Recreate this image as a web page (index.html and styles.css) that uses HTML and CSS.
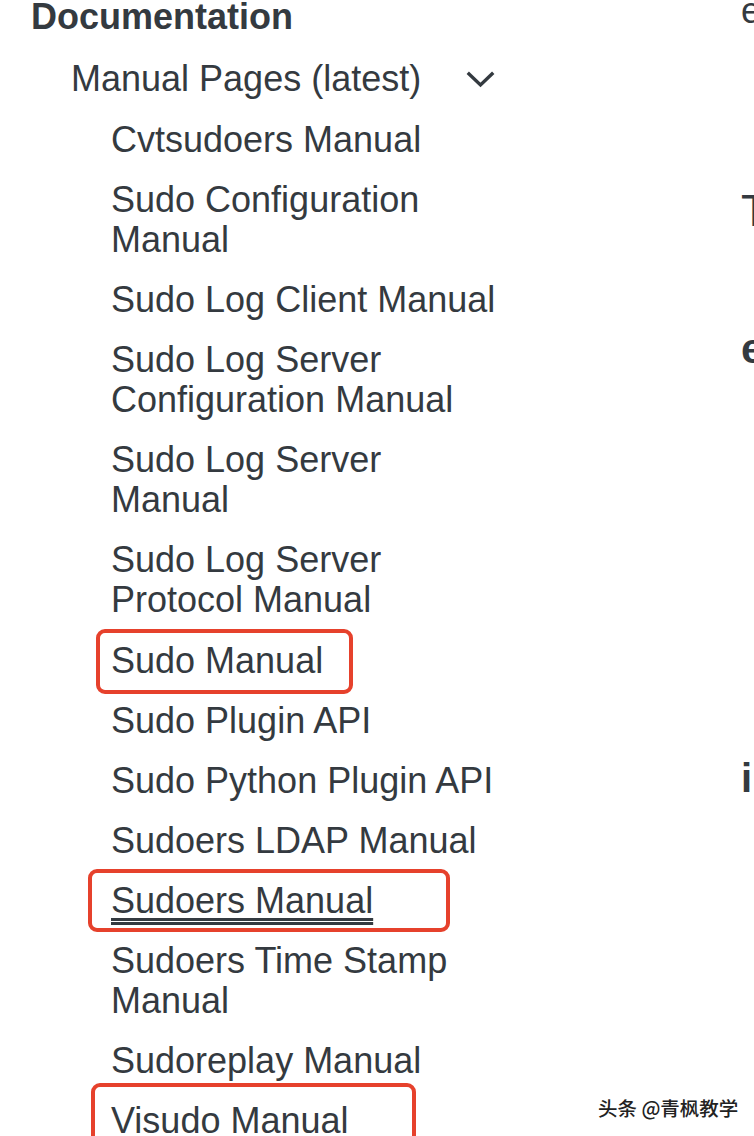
FILE: index.html
```html
<!DOCTYPE html>
<html lang="en">
<head>
<meta charset="utf-8">
<title>Documentation</title>
<link rel="stylesheet" href="styles.css">
</head>
<body>
<div class="page">
  <nav class="sidebar">
    <h2 class="side-title">Documentation</h2>
    <ul class="group">
      <li class="group-head">
        <span>Manual Pages (latest)</span>
        <svg class="chev" width="30" height="20" viewBox="0 0 30 20"><path d="M3 4 L14.5 15 L26 4" fill="none" stroke="#343a40" stroke-width="3.4" stroke-linecap="square"/></svg>
      </li>
      <li>
        <ul class="items">
          <li><a href="#">Cvtsudoers Manual</a></li>
          <li><a href="#">Sudo Configuration Manual</a></li>
          <li><a href="#">Sudo Log Client Manual</a></li>
          <li><a href="#">Sudo Log Server Configuration Manual</a></li>
          <li><a href="#">Sudo Log Server Manual</a></li>
          <li><a href="#">Sudo Log Server Protocol Manual</a></li>
          <li><a href="#">Sudo Manual</a></li>
          <li><a href="#">Sudo Plugin API</a></li>
          <li><a href="#">Sudo Python Plugin API</a></li>
          <li><a href="#">Sudoers LDAP Manual</a></li>
          <li><a href="#" class="active">Sudoers Manual</a></li>
          <li><a href="#">Sudoers Time Stamp Manual</a></li>
          <li><a href="#">Sudoreplay Manual</a></li>
          <li><a href="#">Visudo Manual</a></li>
        </ul>
      </li>
    </ul>
  </nav>
  <main class="content">
    <p class="c1">e</p>
    <p class="c2">T</p>
    <p class="c3">e</p>
    <p class="c4">i</p>
  </main>
  <div class="mark m1"></div>
  <div class="mark m2"></div>
  <div class="mark m3"></div>
  <div class="watermark">头条 @青枫教学</div>
</div>
</body>
</html>
```

FILE: styles.css
```css
html, body {
  margin: 0;
  padding: 0;
  background: #ffffff;
}
body {
  width: 754px;
  height: 1136px;
  overflow: hidden;
  font-family: "Liberation Sans", Arial, Helvetica, sans-serif;
  color: #343a40;
}
.page {
  position: relative;
  display: flex;
  width: 754px;
  height: 1136px;
  overflow: hidden;
}
.sidebar {
  flex: 0 0 710px;
  padding-left: 31px;
}
.side-title {
  margin: -3px 0 0 0;
  font-size: 36px;
  line-height: 40px;
  font-weight: 700;
  color: #343a40;
}
.group {
  list-style: none;
  margin: 22px 0 0 0;
  padding: 0 0 0 40px;
  display: flex;
  flex-direction: column;
  gap: 21px;
}
.group-head {
  display: flex;
  align-items: center;
  justify-content: space-between;
  width: 432px;
  font-size: 36px;
  line-height: 40px;
}
.chev {
  margin-right: 7px;
  margin-top: 1px;
}
.items {
  list-style: none;
  margin: 0;
  padding: 0 0 0 40px;
  width: 392px;
  display: flex;
  flex-direction: column;
  gap: 20.1px;
}
.items a {
  display: block;
  font-size: 36px;
  line-height: 40px;
  color: #343a40;
  text-decoration: none;
}
.items a.active {
  display: inline;
  text-decoration: underline double;
  text-decoration-thickness: 2.5px;
  text-underline-offset: 5px;
}
.content {
  flex: 1 1 auto;
  white-space: nowrap;
}
.content p {
  margin: 0;
  color: #343a40;
}
.c1 {
  font-size: 36px;
  line-height: 40px;
  margin-top: -9px !important;
}
.c2 {
  font-size: 44px;
  line-height: 50px;
  margin-top: 155px !important;
}
.c3 {
  font-size: 42px;
  line-height: 48px;
  font-weight: 700;
  margin-top: 89px !important;
}
.c4 {
  font-size: 40px;
  line-height: 46px;
  font-weight: 700;
  margin-top: 382px !important;
}
.mark {
  position: absolute;
  border: 4px solid #e6412c;
  border-radius: 9px;
  box-sizing: border-box;
}
.m1 { left: 96px; top: 629px; width: 257px; height: 65px; }
.m2 { left: 88px; top: 869px; width: 362px; height: 63px; }
.m3 { left: 91px; top: 1083px; width: 325px; height: 90px; }
.watermark {
  position: absolute;
  left: 598px;
  top: 1095px;
  font-family: "Noto Sans CJK SC", "Liberation Sans", sans-serif;
  font-size: 19.5px;
  font-weight: 500;
  line-height: 26px;
  color: #222222;
  text-shadow: 0 0 2px #ffffff, 0 0 2px #ffffff;
  white-space: nowrap;
}
```
